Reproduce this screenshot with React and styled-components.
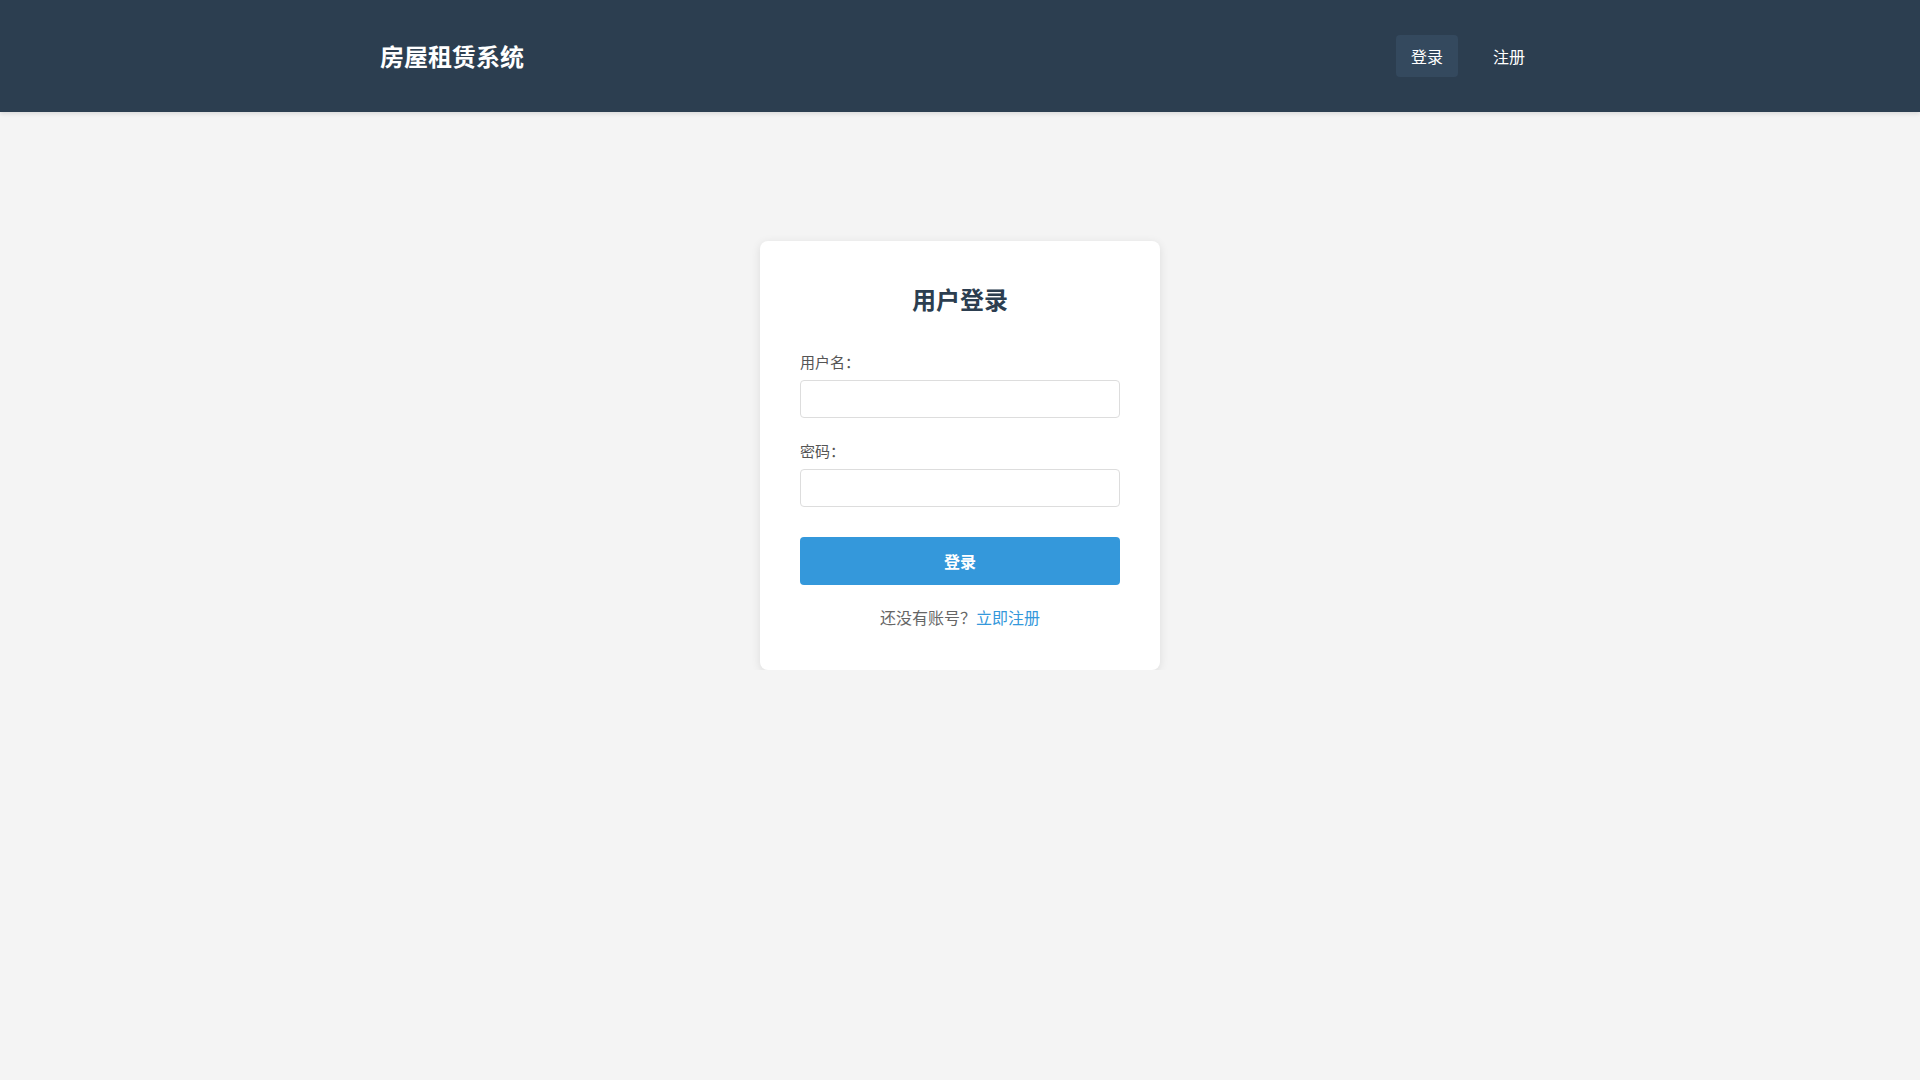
import React from "react";
import styled, { createGlobalStyle } from "styled-components";

const GlobalStyle = createGlobalStyle`
  * { box-sizing: border-box; }
  html, body {
    margin: 0;
    padding: 0;
    background: #f4f4f4;
    font-family: "Microsoft YaHei", "Noto Sans CJK SC", "Noto Sans", sans-serif;
    color: #333;
  }
`;

const Header = styled.header`
  background: #2c3e50;
  box-shadow: 0 2px 4px rgba(0, 0, 0, 0.1);
`;

const HeaderInner = styled.div`
  width: 1200px;
  margin: 0 auto;
  padding: 35px 20px 35px;
  display: flex;
  align-items: center;
  justify-content: space-between;
`;

const Logo = styled.div`
  color: #fff;
  font-size: 24px;
  font-weight: 700;
  line-height: 36px;
`;

const Nav = styled.nav`
  display: flex;
  gap: 20px;
`;

const NavLink = styled.a`
  display: block;
  color: #fff;
  text-decoration: none;
  font-size: 16px;
  line-height: 22px;
  padding: 10px 15px;
  border-radius: 4px;
  background: ${(p) => (p.$active ? "#34495e" : "transparent")};
  cursor: pointer;
`;

const Main = styled.main`
  display: flex;
  justify-content: center;
  padding-top: 129px;
`;

const Card = styled.div`
  width: 400px;
  background: #fff;
  border-radius: 8px;
  box-shadow: 0 2px 10px rgba(0, 0, 0, 0.1);
  padding: 40px;
`;

const Title = styled.h2`
  margin: 0 0 34px;
  text-align: center;
  color: #2c3e50;
  font-size: 24px;
  font-weight: 700;
  line-height: 36px;
`;

const FormGroup = styled.div`
  margin-bottom: ${(p) => p.$mb || "22px"};
`;

const Label = styled.label`
  display: block;
  color: #555;
  font-size: 15px;
  line-height: 22px;
  margin-bottom: 7px;
`;

const Input = styled.input`
  display: block;
  width: 100%;
  height: 38px;
  border: 1px solid #ddd;
  border-radius: 4px;
  padding: 0 10px;
  font-size: 15px;
  font-family: inherit;
  outline: none;
  background: #fff;
`;

const SubmitButton = styled.button`
  display: block;
  width: 100%;
  height: 48px;
  border: none;
  border-radius: 4px;
  background: #3498db;
  color: #fff;
  font-size: 16px;
  font-weight: 600;
  font-family: inherit;
  cursor: pointer;
`;

const Footer = styled.p`
  margin: 20px 0 0;
  padding-bottom: 1px;
  text-align: center;
  color: #666;
  font-size: 16px;
  line-height: 24px;
`;

const FooterLink = styled.a`
  color: #3498db;
  text-decoration: none;
`;

export default function App() {
  return (
    <>
      <GlobalStyle />
      <Header>
        <HeaderInner>
          <Logo>房屋租赁系统</Logo>
          <Nav>
            <NavLink $active>登录</NavLink>
            <NavLink>注册</NavLink>
          </Nav>
        </HeaderInner>
      </Header>
      <Main>
        <Card>
          <Title>用户登录</Title>
          <FormGroup>
            <Label>用户名：</Label>
            <Input type="text" />
          </FormGroup>
          <FormGroup $mb="30px">
            <Label>密码：</Label>
            <Input type="password" />
          </FormGroup>
          <SubmitButton>登录</SubmitButton>
          <Footer>
            还没有账号？<FooterLink>立即注册</FooterLink>
          </Footer>
        </Card>
      </Main>
    </>
  );
}
